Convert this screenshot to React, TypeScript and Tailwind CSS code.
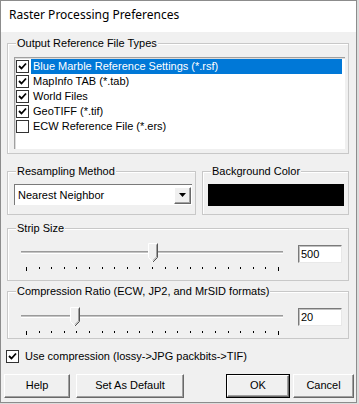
import React from "react";

const font = { fontFamily: '"Liberation Sans", Arial, sans-serif' };

function Check({ checked }: { checked: boolean }) {
  return (
    <div className="w-[13px] h-[13px] bg-white border border-[#333] flex items-center justify-center shrink-0">
      {checked && (
        <svg width="9" height="9" viewBox="0 0 9 9">
          <path d="M1 4 L3.5 6.5 L8 1.5" stroke="#000" strokeWidth="1.8" fill="none" />
        </svg>
      )}
    </div>
  );
}

function Group({
  label,
  className,
  children,
}: {
  label: string;
  className: string;
  children?: React.ReactNode;
}) {
  return (
    <div className={`relative border border-[#c8c8c8] shadow-[inset_1px_1px_0_#fff] ${className}`}>
      <span className="absolute -top-[8px] left-[8px] bg-[#f0f0f0] px-[1px] text-[11px] leading-[14px] text-black whitespace-nowrap">
        {label}
      </span>
      {children}
    </div>
  );
}

function Slider({ pos }: { pos: number }) {
  const ticks = Array.from({ length: 21 }, (_, i) => i);
  return (
    <div className="relative w-[276px] h-[34px]">
      <div className="absolute left-[13px] top-[8px] w-[262px] h-[1px] bg-[#9a9a9a]" />
      <div className="absolute left-[13px] top-[9px] w-[262px] h-[1px] bg-[#c4c4c4]" />
      <div className="absolute left-[13px] top-[10px] w-[262px] h-[1px] bg-white" />
      <svg
        className="absolute top-0"
        style={{ left: pos }}
        width="11"
        height="20"
        viewBox="0 0 11 20"
      >
        <path d="M0.5 0.5 H9.5 V14.5 L5 19 L0.5 14.5 Z" fill="#f0f0f0" stroke="#fff" />
        <path d="M9.5 0.5 V14.5 L5 19" fill="none" stroke="#555" />
        <path d="M8.5 1.5 V14 L5 17.5" fill="none" stroke="#a0a0a0" />
      </svg>
      <div className="absolute left-[18px] top-[24px] w-[253px] flex justify-between items-start">
        {ticks.map((i) => (
          <div
            key={i}
            className={`w-[1px] bg-black ${i === 0 || i === 20 ? "h-[4px]" : "h-[2px]"}`}
          />
        ))}
      </div>
    </div>
  );
}

function TextBox({ value }: { value: string }) {
  return (
    <div className="w-[44px] h-[18px] bg-white border-t border-l border-[#7a7a7a] border-b border-r border-b-[#e8e8e8] border-r-[#e8e8e8] shadow-[inset_1px_1px_0_#c0c0c0] text-[11px] leading-[15px] pl-[2px] pt-[1px]">
      {value}
    </div>
  );
}

function Button({ label, className, def }: { label: string; className: string; def?: boolean }) {
  const inner = (
    <div className="w-full h-full flex items-center justify-center border border-t-white border-l-white border-r-[#696969] border-b-[#696969] shadow-[inset_-1px_-1px_0_#a0a0a0] text-[11px]">
      {label}
    </div>
  );
  return (
    <div className={`h-[24px] ${className} ${def ? "border border-black" : ""}`}>{inner}</div>
  );
}

export default function App() {
  const items: [string, boolean][] = [
    ["Blue Marble Reference Settings (*.rsf)", true],
    ["MapInfo TAB (*.tab)", true],
    ["World Files", true],
    ["GeoTIFF (*.tif)", true],
    ["ECW Reference File (*.ers)", false],
  ];
  return (
    <div className="w-[359px] h-[404px] bg-[#dcdcdc] text-black" style={font}>
      <div className="w-[357px] h-[403px] border border-[#8c8c8c] flex flex-col bg-[#f0f0f0]">
        <div
          className="h-[31px] bg-white flex items-center pl-[8px] pb-[4px] text-[12px]"
          style={{ fontFamily: '"Noto Sans", "Open Sans", sans-serif' }}
        >
          Raster Processing Preferences
        </div>
        <div className="flex-1 flex flex-col pl-[6px]">
          <Group label="Output Reference File Types" className="mt-[11px] w-[342px] h-[111px] pt-[13px] pl-[6px]">
            <div className="w-[331px] h-[92px] bg-white border-t border-l border-[#a0a0a0] border-b-[#f0f0f0] border-r-[#f0f0f0] shadow-[inset_1px_1px_0_#dcdcdc] pt-[1px]">
              {items.map(([t, c], i) => (
                <div key={t} className="h-[15px] flex items-center">
                  <div className="w-[16px] pl-[1px] flex items-center">
                    <Check checked={c} />
                  </div>
                  <div
                    className={`h-[15px] flex items-center pl-[2px] text-[11px] ${
                      i === 0 ? "bg-[#0078d7] text-white w-[311px]" : ""
                    }`}
                  >
                    {t}
                  </div>
                </div>
              ))}
            </div>
          </Group>

          <div className="flex mt-[17px] gap-[6px]">
            <Group label="Resampling Method" className="w-[189px] h-[44px] pt-[12px] pl-[6px]">
              <div className="w-[178px] h-[21px] bg-white border-t border-l border-[#7a7a7a] border-b-[#e8e8e8] border-r-[#e8e8e8] flex items-center justify-between">
                <span className="text-[11px] pl-[3px]">Nearest Neighbor</span>
                <div className="w-[17px] h-[17px] mr-[1px] flex items-center justify-center border border-t-white border-l-white border-r-[#696969] border-b-[#696969] bg-[#f0f0f0] shadow-[inset_-1px_-1px_0_#a0a0a0]">
                  <svg width="7" height="4" viewBox="0 0 7 4">
                    <path d="M0 0 H7 L3.5 4 Z" fill="#000" />
                  </svg>
                </div>
              </div>
            </Group>
            <Group label="Background Color" className="w-[147px] h-[44px] pt-[12px] pl-[5px]">
              <div className="w-[136px] h-[22px] bg-black" />
            </Group>
          </div>

          <Group label="Strip Size" className="mt-[13px] w-[342px] h-[53px] pt-[14px] pl-[0px] flex items-start">
            <Slider pos={140} />
            <div className="ml-[14px] mt-[2px]">
              <TextBox value="500" />
            </div>
          </Group>

          <Group
            label="Compression Ratio (ECW, JP2, and MrSID formats)"
            className="mt-[10px] w-[342px] h-[48px] pt-[15px] pl-[0px] flex items-start"
          >
            <Slider pos={62} />
            <div className="ml-[14px] mt-[1px]">
              <TextBox value="20" />
            </div>
          </Group>

          <div className="flex items-center mt-[9px] -ml-[1px]">
            <Check checked={true} />
            <span className="text-[11px] ml-[6px]">Use compression (lossy-&gt;JPG packbits-&gt;TIF)</span>
          </div>

          <div className="flex mt-[9px] -ml-[3px]">
            <Button label="Help" className="w-[66px]" />
            <Button label="Set As Default" className="w-[108px] ml-[6px]" />
            <Button label="OK" className="w-[64px] ml-[42px]" def />
            <Button label="Cancel" className="w-[61px] ml-[3px]" />
          </div>
        </div>
      </div>
    </div>
  );
}
